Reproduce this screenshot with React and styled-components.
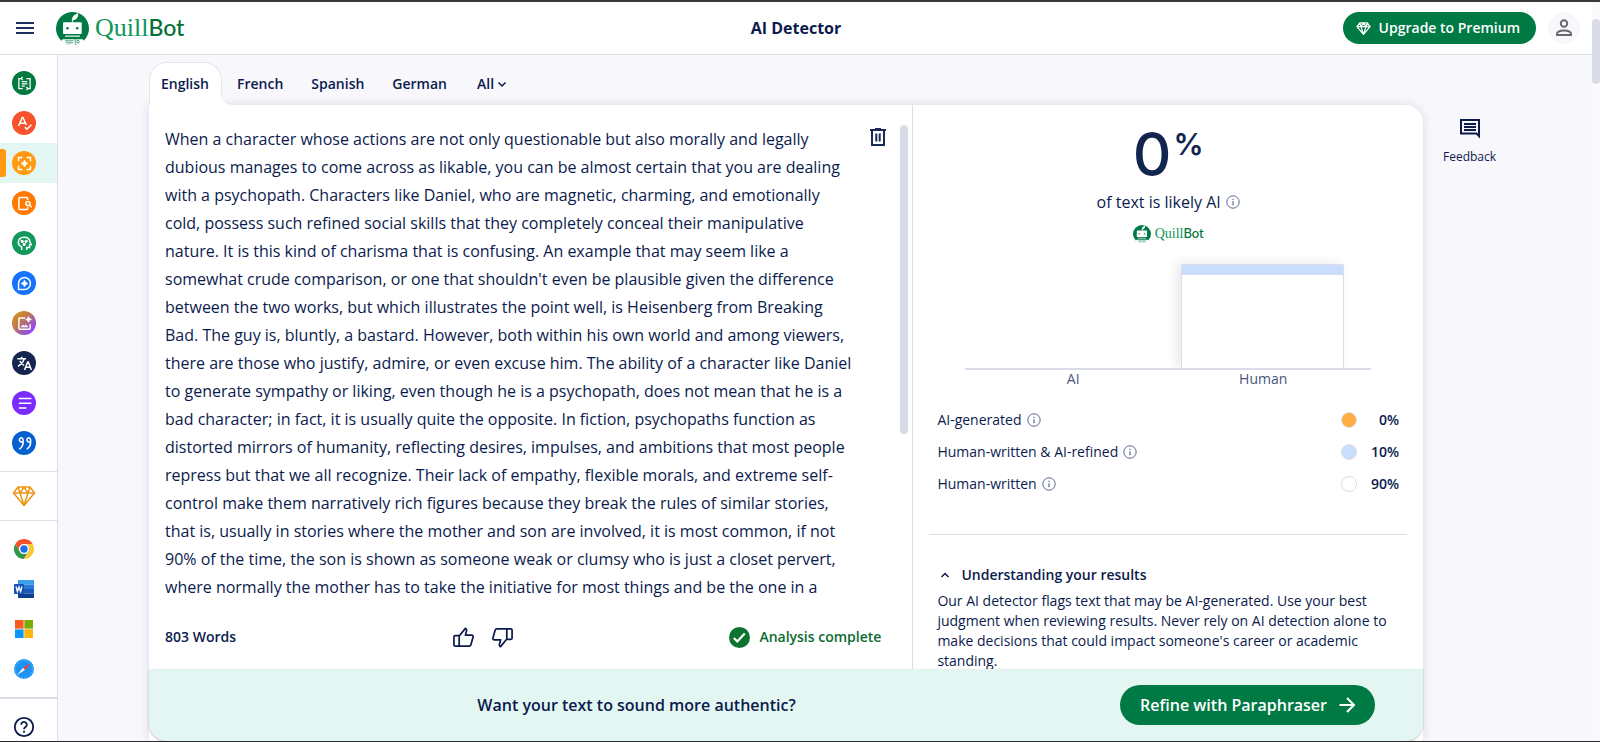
import React from 'react'
import styled, { createGlobalStyle, css } from 'styled-components'

const navy = '#0b1b4d'
const green = '#007a45'
const line = '#dcdee6'
const mint = '#e4f6f2'

const GlobalStyle = createGlobalStyle`
  * {
    box-sizing: border-box;
  }
  body {
    margin: 0;
    font-family: 'Open Sans', 'Noto Sans', sans-serif;
    font-size: 14px;
    line-height: 20px;
    color: ${navy};
    background: #f7f7fc;
  }
  button {
    font: inherit;
    color: inherit;
    border: 0;
    padding: 0;
    background: none;
    cursor: pointer;
  }
  a {
    color: inherit;
    text-decoration: none;
  }
  svg {
    display: block;
    flex: none;
  }
`

const Page = styled.div`
  display: flex;
  height: 100vh;
  overflow: hidden;
  border-top: 2px solid #3b3839;
  border-bottom: 1px solid #2a2a2c;
`

const Column = styled.div`
  flex: 1;
  min-width: 0;
  display: flex;
  flex-direction: column;
`

const PageScroll = styled.div`
  width: 8px;
  padding-top: 17px;
  background: #fafafd;
`

const ScrollThumb = styled.div`
  width: 8px;
  height: ${props => props.$length};
  border-radius: 4px;
  background: #d9dce6;
`

const Header = styled.header`
  display: grid;
  grid-template-columns: 1fr auto 1fr;
  align-items: center;
  height: 53px;
  flex: none;
  padding: 0 12px;
  background: #fff;
  border-bottom: 1px solid ${line};
`

const HeaderLeft = styled.div`
  display: flex;
  align-items: center;
  gap: 22px;
  padding-left: 4px;
`

const HeaderRight = styled.div`
  display: flex;
  align-items: center;
  justify-content: flex-end;
  gap: 12px;
`

const Title = styled.h1`
  margin: 0;
  font-size: 16px;
  font-weight: 700;
`

const UpgradeButton = styled.button`
  display: flex;
  align-items: center;
  gap: 8px;
  height: 32px;
  padding: 0 16px 0 13px;
  border-radius: 16px;
  background: ${green};
  color: #fff;
  font-weight: 600;
`

const Avatar = styled.button`
  display: grid;
  place-items: center;
  width: 32px;
  height: 32px;
  border-radius: 50%;
  background: #f7f7fc;
`

const Brand = styled.a`
  display: flex;
  align-items: center;
  gap: ${props => (props.$small ? '4px' : '6px')};
`

const Wordmark = styled.span`
  display: flex;
  align-items: baseline;
  line-height: 1;
`

const Quill = styled.span`
  font-family: 'Liberation Serif', serif;
  font-size: ${props => (props.$small ? '14px' : '26px')};
  color: #0f9658;
`

const Bot = styled.span`
  font-family: Lato, sans-serif;
  font-size: ${props => (props.$small ? '13px' : '23px')};
  font-weight: 500;
  color: #007033;
`

const Body = styled.div`
  flex: 1;
  min-height: 0;
  display: flex;
`

const Sidebar = styled.nav`
  flex: none;
  width: 58px;
  overflow: hidden;
  background: #fff;
  border-right: 1px solid ${line};
`

const NavGroup = styled.div`
  padding: ${props => props.$pad || '8px 0'};
  border-bottom: ${props => props.$border || '1px'} solid ${line};
`

const NavLink = styled.a`
  position: relative;
  display: flex;
  align-items: center;
  height: 40px;
  padding-left: 12px;
  ${props => props.$active && css`
    background: ${mint};
    &::before {
      content: '';
      position: absolute;
      left: 0;
      top: 6px;
      width: 6px;
      height: 28px;
      border-radius: 0 3px 3px 0;
      background: #ff9a12;
    }
  `}
`

const NavIcon = styled.span`
  display: grid;
  place-items: center;
  width: 24px;
  height: 24px;
  border-radius: 50%;
  background: ${props => props.$bg || 'none'};
`

const Main = styled.main`
  flex: 1;
  min-width: 0;
  display: flex;
  padding-left: 91px;
`

const Workspace = styled.section`
  flex: 1;
  min-width: 0;
  display: flex;
  flex-direction: column;
  padding-top: 7px;
`

const Tabs = styled.div`
  display: flex;
  flex: none;
  gap: 2px;
  height: 43px;
`

const Tab = styled.button`
  position: relative;
  z-index: 1;
  display: flex;
  align-items: center;
  gap: 2px;
  padding: 0 12px;
  border: 1px solid transparent;
  border-bottom: 0;
  font-weight: 600;
  ${props => props.$active && css`
    padding: 0 12px 0 11px;
    background: #fff;
    border-color: #e6e7ee;
    border-radius: 18px 18px 0 0;
    &::after {
      content: '';
      position: absolute;
      left: 100%;
      bottom: 0;
      width: 10px;
      height: 10px;
      background: radial-gradient(circle at 100% 0, transparent 9px, #e6e7ee 9px, #fff 10px);
    }
  `}
`

const MoreTab = styled(Tab)`
  padding-left: 14px;
`

const Card = styled.div`
  flex: 1;
  min-height: 0;
  display: flex;
  flex-direction: column;
  background: #fff;
  border-radius: 0 18px 0 0;
  box-shadow: 0 0 10px rgba(40, 40, 90, 0.14);
`

const Panes = styled.div`
  flex: 1;
  min-height: 0;
  display: grid;
  grid-template-columns: 3fr 2fr;
`

const Editor = styled.div`
  min-height: 0;
  display: flex;
  flex-direction: column;
  border-right: 1px solid ${line};
`

const EditorBody = styled.div`
  flex: 1;
  min-height: 0;
  display: flex;
  padding: 20px 4px 0 16px;
`

const TextBox = styled.textarea`
  flex: 1;
  min-width: 0;
  height: 100%;
  padding: 0 12px 0 0;
  border: 0;
  outline: 0;
  resize: none;
  overflow: hidden;
  background: none;
  font: 400 16px/28px 'Open Sans', 'Noto Sans', sans-serif;
  color: ${navy};
`

const ClearButton = styled.button`
  align-self: flex-start;
  margin: 2px 12px 0 0;
`

const EditorFooter = styled.div`
  flex: none;
  display: flex;
  justify-content: space-between;
  align-items: center;
  height: 68px;
  padding: 4px 31px 0 16px;
  font-weight: 600;
`

const Votes = styled.div`
  display: flex;
  gap: 16px;
`

const Status = styled.span`
  display: flex;
  align-items: center;
  gap: 9px;
  color: #0a6b32;
`

const Results = styled.div`
  min-height: 0;
  overflow: hidden;
  display: flex;
  flex-direction: column;
  align-items: center;
  padding: 17px 16px 0;
  > * {
    flex: none;
  }
`

const Score = styled.div`
  display: flex;
  align-items: flex-start;
  gap: 2px;
  height: 70px;
  font-family: Inter, sans-serif;
  font-weight: 500;
  font-size: 60px;
  line-height: 64px;
  color: #12254f;
`

const Percent = styled.span`
  font-size: 30px;
  font-weight: 600;
  line-height: 44px;
`

const ScoreCaption = styled.div`
  display: flex;
  align-items: center;
  gap: 5px;
  margin-bottom: 13px;
  font-size: 16px;
`

const Chart = styled.div`
  display: flex;
  align-items: flex-end;
  justify-content: center;
  gap: 28px;
  width: 85%;
  height: 127px;
  padding: 0 27px;
  border-bottom: 2px solid #d9dce6;
`

const Bar = styled.div`
  display: flex;
  flex-direction: column;
  flex: 1;
  height: ${props => props.$height};
  border-radius: 2px 2px 0 0;
  background: #fff;
  ${props => props.$filled && css`
    border: 1px solid ${line};
    border-bottom: 0;
    box-shadow: -4px 0 12px rgba(60, 40, 90, 0.12);
    clip-path: inset(-12px -12px 0 -12px);
  `}
`

const BarBand = styled.div`
  height: 10%;
  background: #c9ddff;
  border-bottom: 1px solid #d3dcf0;
`

const ChartLabels = styled.div`
  display: flex;
  gap: 28px;
  width: 85%;
  padding: 0 27px;
  line-height: 18px;
  text-align: center;
  color: #4a5680;
  span {
    flex: 1;
  }
`

const Legend = styled.dl`
  align-self: stretch;
  margin: 16px 0 34px;
  padding: 0 8px;
`

const LegendRow = styled.div`
  display: flex;
  align-items: center;
  height: 32px;
`

const LegendName = styled.dt`
  flex: 1;
  display: flex;
  align-items: center;
  gap: 5px;
`

const Dot = styled.span`
  width: 16px;
  height: 16px;
  border-radius: 50%;
  border: 1px solid ${line};
  background: ${props => props.$color};
`

const LegendValue = styled.dd`
  display: flex;
  align-items: center;
  margin: 0;
  font-weight: 600;
  b {
    width: 42px;
    font-weight: 600;
    text-align: right;
  }
`

const Explanation = styled.section`
  align-self: stretch;
  padding: 30px 8px 0;
  border-top: 1px solid #dedede;
  p {
    margin: 6px 0 0;
  }
`

const ExplanationToggle = styled.button`
  display: flex;
  align-items: center;
  gap: 8px;
  font-weight: 600;
`

const Banner = styled.div`
  flex: none;
  display: flex;
  align-items: center;
  height: 72px;
  padding: 0 48px 0 4px;
  background: ${mint};
  border-radius: 0 0 18px 18px;
  box-shadow: 0 1px 2px rgba(60, 40, 60, 0.3);
  font-size: 16px;
  font-weight: 600;
  span {
    flex: 1;
    text-align: center;
  }
`

const RefineButton = styled.button`
  display: flex;
  align-items: center;
  gap: 8px;
  height: 40px;
  padding: 0 16px 0 20px;
  border-radius: 20px;
  background: ${green};
  color: #fff;
  font-weight: 600;
`

const Aside = styled.aside`
  flex: none;
  width: 169px;
  padding: 61px 0 0 20px;
`

const FeedbackButton = styled.button`
  display: flex;
  flex-direction: column;
  align-items: center;
  gap: 7px;
  font-size: 12px;
`

const Icon = ({ size = 16, w = 2, color = 'currentColor', box = 24, children }) => (
  <svg
    width={size}
    height={size}
    viewBox={`0 0 ${box} ${box}`}
    fill="none"
    stroke={color}
    strokeWidth={w}
    aria-hidden="true"
  >
    {children}
  </svg>
)

const Robot = ({ size }) => (
  <svg width={size} height={size} viewBox="0 0 33 33" aria-hidden="true">
    <circle cx="16.5" cy="16.5" r="16.5" fill={green} />
    <path d="M16.300 8.500C15.500 5.500 18 2.300 22 1.300C22.800 4.500 21 7.300 17.500 8.200Z" fill="#fff" />
    <path d="M16.400 7v3.500" stroke="#fff" strokeWidth=".9" />
    <rect x="7" y="10.300" width="18.700" height="11.700" rx="1" fill="#fff" />
    <circle cx="11.500" cy="16.300" r="1.300" fill={green} />
    <circle cx="21.200" cy="16.300" r="1.300" fill={green} />
    <path d="M9 23.500h15v1.300H9z" fill="#e3efe8" />
    <path d="M6.600 27.200h20.200l1.500 2.100Q23 33.300 16.500 33Q10 33.300 5 29.300Z" fill="#fff" />
    <path d="M9 28.800h8.500M10 30.800h7" stroke={green} strokeWidth=".7" />
    <circle cx="22" cy="29.600" r="1.300" stroke={green} strokeWidth=".7" fill="none" />
    <path d="M19.200 27.200v5.300" stroke={green} strokeWidth=".7" />
  </svg>
)

const Logo = ({ small }) => (
  <Brand href="#" $small={small}>
    <Robot size={small ? 18 : 33} />
    <Wordmark>
      <Quill $small={small}>Quill</Quill>
      <Bot $small={small}>Bot</Bot>
    </Wordmark>
  </Brand>
)

const Diamond = ({ size, w, color }) => (
  <Icon size={size} w={w} color={color}>
    <path d="M6 3h12l4.500 6L12 21.500L1.500 9Z M1.500 9h21 M6 3L8 9L12 3L16 9L18 3 M8 9L12 21.500L16 9" strokeLinejoin="round" />
  </Icon>
)

const Info = () => (
  <Icon size={14} w={1} box={14} color="#5a678d">
    <circle cx="7" cy="7" r="6.200" />
    <path d="M7 6.200V10.200M7 3.800V5" strokeWidth="1.200" />
  </Icon>
)

const ThumbUp = () => (
  <Icon size={23} w={1.800}>
    <path d="M7.500 10v11H3.500a1.500 1.500 0 0 1-1.500-1.500V11.500a1.500 1.500 0 0 1 1.500-1.500ZM7.500 10.500L14 2.500q1.500.5 1.300 2.300L14 9.500h6.500a1.500 1.500 0 0 1 1.500 2l-2.300 8A2 2 0 0 1 17.800 21H7.500" strokeLinejoin="round" />
  </Icon>
)

const ThumbDown = () => (
  <Icon size={23} w={1.800}>
    <path d="M16.500 14V3h4a1.500 1.500 0 0 1 1.500 1.500v8a1.500 1.500 0 0 1-1.500 1.500ZM16.500 13.500L10 21.500q-1.500-.5-1.300-2.300L10 14.500H3.500a1.500 1.500 0 0 1-1.500-2l2.300-8A2 2 0 0 1 6.200 3H16.500" strokeLinejoin="round" />
  </Icon>
)

const spark = 'M12 6.500Q13 11 17.500 12Q13 13 12 17.500Q11 13 6.500 12Q11 11 12 6.500Z'

const tools = [
  {
    name: 'Paraphraser',
    bg: '#007a3d',
    icon: <path d="M9 1.500L6.500 4L9 6.500M7 4H3v16h6M15 22.500L17.500 20L15 17.500M17 20h4V4h-6M7.500 9h9M7.500 12.500h9M7.500 16h5" strokeWidth="2" />
  },
  {
    name: 'Grammar Checker',
    bg: '#f9532d',
    icon: <path d="M2.500 16L8.500 2.500h1l5.500 12M5 11.500h8M12.500 18l3.500 3l7-7" />
  },
  {
    name: 'AI Detector',
    bg: '#ff9a12',
    active: true,
    icon: <><path d="M2.500 8.500v-6h6M15.500 2.500h6v6M21.500 15.500v6h-6M8.500 21.500h-6v-6" /><path d={spark} fill="#fff" strokeWidth="1" /></>
  },
  {
    name: 'Plagiarism Checker',
    bg: '#ff7a00',
    icon: <><path d="M17 6.500V4a1.500 1.500 0 0 0-1.500-1.500H4.500A1.500 1.500 0 0 0 3 4v16A1.500 1.500 0 0 0 4.500 21.500h11a1.500 1.500 0 0 0 1.500-1.500V18" /><circle cx="17.500" cy="12" r="3.300" /><path d="M20 14.500l3.500 3.500" /></>
  },
  {
    name: 'AI Humanizer',
    bg: '#12995c',
    icon: <><path d="M7.500 22.500v-5Q2 15 2 10.500Q2.500 2 11.500 2Q20 2 21 10l1.500 4H20v4.500H15.500v4" /><path d="M8 8.500h7L11.500 14Z" strokeWidth="1.500" /><circle cx="8" cy="8.500" r="1.200" /><circle cx="15" cy="8.500" r="1.200" /><circle cx="11.500" cy="13.500" r="1.200" /></>
  },
  {
    name: 'AI Chat',
    bg: '#1472fb',
    icon: <><path d="M2.500 21.500V12a9.500 9.500 0 1 1 9.500 9.500Z" /><path d={spark} fill="#fff" strokeWidth="1" /></>
  },
  {
    name: 'Image Generator',
    bg: 'linear-gradient(135deg, #d99a00 0%, #c07a50 40%, #8b45ff 85%)',
    icon: <><path d="M13 3H4.500A1.500 1.500 0 0 0 3 4.500v15A1.500 1.500 0 0 0 4.500 21h15a1.500 1.500 0 0 0 1.500-1.500V13" /><path d="M6.500 17.500l3-3l2.500 2l2-2.500L17.500 17.500Z" fill="#fff" strokeWidth="1" /><path d="M18.500 1Q19 5 23 5.500Q19 6 18.500 10Q18 6 14 5.500Q18 5 18.500 1Z" fill="#fff" strokeWidth="1.500" /></>
  },
  {
    name: 'Translator',
    bg: '#14264f',
    icon: <path d="M.5 4.500h14M7.500 1v3.500M11.500 4.500Q9.500 12 1.500 16.500M4.500 8Q7 13 11.500 15M12 22.500l5-13h1L23 22.500M13.500 18h8" />
  },
  {
    name: 'Summarizer',
    bg: '#7a2cff',
    icon: <path d="M3 4h20M3 11.500h20M3 19h12" />
  },
  {
    name: 'Citation Generator',
    bg: '#0560cf',
    icon: <path d="M9.500 9a3.500 3.500 0 1 1-3.500-6A3.700 3.700 0 0 1 9.800 7.500Q10.500 17 3.500 21M21.500 9a3.500 3.500 0 1 1-3.500-6A3.700 3.700 0 0 1 21.800 7.500Q22.500 17 15.500 21" />
  }
]

const apps = [
  {
    name: 'Chrome',
    icon: (
      <svg width="20" height="20" viewBox="0 0 48 48">
        <path d="M44.800 12A24 24 0 0 0 3.200 12L13.600 30A12 12 0 0 1 24 12Z" fill="#f4512c" />
        <path d="M3.200 12A24 24 0 0 0 24 48L34.400 30A12 12 0 0 1 13.600 30Z" fill="#34984b" />
        <path d="M24 48A24 24 0 0 0 44.800 12H24A12 12 0 0 1 34.400 30Z" fill="#fdc93b" />
        <circle cx="24" cy="24" r="11.500" fill="#fff" />
        <circle cx="24" cy="24" r="8.800" fill="#1a6fe8" />
      </svg>
    )
  },
  {
    name: 'Word',
    icon: (
      <svg width="20" height="18" viewBox="0 0 20 18">
        <path d="M4 0h16v4.500H4z" fill="#3aa0ee" />
        <path d="M4 4.500h16V9H4z" fill="#2a7bd8" />
        <path d="M4 9h16v4.500H4z" fill="#1a5abd" />
        <path d="M4 13.500h16V18H4z" fill="#103f91" />
        <rect y="4" width="10" height="10" rx="1" fill="#1850b4" />
        <path d="M2 6.500l1.400 5L5 7l1.600 4.500L8 6.500" stroke="#fff" strokeWidth="1.300" fill="none" />
      </svg>
    )
  },
  {
    name: 'Windows',
    icon: (
      <svg width="18" height="18" viewBox="0 0 18 18">
        <path d="M0 0h18v18H0z" fill="#e8e0c8" />
        <path d="M0 0h8.500v8.500H0z" fill="#fb5a20" />
        <path d="M9.500 0H18v8.500H9.500z" fill="#7cab05" />
        <path d="M0 9.500h8.500V18H0z" fill="#0a98f8" />
        <path d="M9.500 9.500H18V18H9.500z" fill="#ffb506" />
      </svg>
    )
  },
  {
    name: 'Safari',
    icon: (
      <svg width="20" height="20" viewBox="0 0 20 20">
        <circle cx="10" cy="10" r="10" fill="#1b93f5" />
        <circle cx="10" cy="10" r="8.600" fill="none" stroke="#8fd0ff" strokeWidth=".8" strokeDasharray=".6 1" />
        <path d="M17 4L9 8.800L11 11Z" fill="#fb3b2f" />
        <path d="M3 16L9 8.800L11 11Z" fill="#f2f6fb" />
      </svg>
    )
  }
]

const legend = [
  { name: 'AI-generated', color: '#ffae42', value: '0%' },
  { name: 'Human-written & AI-refined', color: '#c9ddff', value: '10%' },
  { name: 'Human-written', color: '#fff', value: '90%' }
]

const essay = "When a character whose actions are not only questionable but also morally and legally dubious manages to come across as likable, you can be almost certain that you are dealing with a psychopath. Characters like Daniel, who are magnetic, charming, and emotionally cold, possess such refined social skills that they completely conceal their manipulative nature. It is this kind of charisma that is confusing. An example that may seem like a somewhat crude comparison, or one that shouldn't even be plausible given the difference between the two works, but which illustrates the point well, is Heisenberg from Breaking Bad. The guy is, bluntly, a bastard. However, both within his own world and among viewers, there are those who justify, admire, or even excuse him. The ability of a character like Daniel to generate sympathy or liking, even though he is a psychopath, does not mean that he is a bad character; in fact, it is usually quite the opposite. In fiction, psychopaths function as distorted mirrors of humanity, reflecting desires, impulses, and ambitions that most people repress but that we all recognize. Their lack of empathy, flexible morals, and extreme self-control make them narratively rich figures because they break the rules of similar stories, that is, usually in stories where the mother and son are involved, it is most common, if not 90% of the time, the son is shown as someone weak or clumsy who is just a closet pervert, where normally the mother has to take the initiative for most things and be the one in a"

const TopBar = () => (
  <Header>
    <HeaderLeft>
      <button aria-label="Menu">
        <Icon size={18} w={2} box={18} color="#1f2f5c">
          <path d="M0 4h18M0 9h18M0 14h18" />
        </Icon>
      </button>
      <Logo />
    </HeaderLeft>
    <Title>AI Detector</Title>
    <HeaderRight>
      <UpgradeButton>
        <Diamond size={15} w={2} />
        Upgrade to Premium
      </UpgradeButton>
      <Avatar aria-label="Account">
        <Icon size={24} w={2} color="#6a6a6e">
          <circle cx="12" cy="7.500" r="3.200" />
          <path d="M5 19v-1q0-3.500 7-3.500t7 3.500v1Z" />
        </Icon>
      </Avatar>
    </HeaderRight>
  </Header>
)

const SideNav = () => (
  <Sidebar>
    <NavGroup>
      {tools.map(tool => (
        <NavLink key={tool.name} href="#" aria-label={tool.name} $active={tool.active}>
          <NavIcon $bg={tool.bg}>
            <Icon size={15} w={2.4} color="#fff">{tool.icon}</Icon>
          </NavIcon>
        </NavLink>
      ))}
    </NavGroup>
    <NavGroup $pad="4px 0">
      <NavLink href="#" aria-label="Premium">
        <NavIcon><Diamond size={24} w={1.500} color="#ec9612" /></NavIcon>
      </NavLink>
    </NavGroup>
    <NavGroup $border="2px">
      {apps.map(app => (
        <NavLink key={app.name} href="#" aria-label={app.name}>
          <NavIcon>{app.icon}</NavIcon>
        </NavLink>
      ))}
    </NavGroup>
    <NavGroup>
      <NavLink href="#" aria-label="Help">
        <NavIcon>
          <Icon size={24} w={1.800}>
            <circle cx="12" cy="12" r="9.200" />
            <path d="M9.200 9.800a2.800 2.800 0 1 1 4.300 2.300Q12 13.100 12 14.300M12 15.700v2" />
          </Icon>
        </NavIcon>
      </NavLink>
    </NavGroup>
  </Sidebar>
)

const LanguageTabs = () => (
  <Tabs role="tablist">
    {['English', 'French', 'Spanish', 'German'].map((name, i) => (
      <Tab key={name} role="tab" aria-selected={i === 0} $active={i === 0}>{name}</Tab>
    ))}
    <MoreTab aria-haspopup="menu">
      All
      <Icon size={12} w={1.500} box={12}><path d="M2.500 4.500L6 8l3.500-3.500" /></Icon>
    </MoreTab>
  </Tabs>
)

const EditorPane = () => (
  <Editor>
    <EditorBody>
      <TextBox aria-label="Text to analyze" defaultValue={essay} spellCheck={false} />
      <ClearButton aria-label="Delete text">
        <Icon size={20} w={2} box={20} color="#1b2b59">
          <path d="M2 3h16M7 2h6M4 3V18h12V3M8.300 6.500v8M11.700 6.500v8" />
        </Icon>
      </ClearButton>
      <ScrollThumb $length="65%" />
    </EditorBody>
    <EditorFooter>
      <span>803 Words</span>
      <Votes>
        <button aria-label="Good result"><ThumbUp /></button>
        <button aria-label="Bad result"><ThumbDown /></button>
      </Votes>
      <Status>
        <Icon size={21} w={2.600}>
          <circle cx="12" cy="12" r="12" fill="#0c7430" stroke="none" />
          <path d="M5.500 12.500l4 4l8.500-9" stroke="#fff" />
        </Icon>
        Analysis complete
      </Status>
    </EditorFooter>
  </Editor>
)

const ResultsPane = () => (
  <Results>
    <Score>0<Percent>%</Percent></Score>
    <ScoreCaption>of text is likely AI <Info /></ScoreCaption>
    <Logo small />
    <Chart>
      <Bar $height="0" />
      <Bar $height="104px" $filled><BarBand /></Bar>
    </Chart>
    <ChartLabels>
      <span>AI</span>
      <span>Human</span>
    </ChartLabels>
    <Legend>
      {legend.map(item => (
        <LegendRow key={item.name}>
          <LegendName>{item.name} <Info /></LegendName>
          <LegendValue>
            <Dot $color={item.color} />
            <b>{item.value}</b>
          </LegendValue>
        </LegendRow>
      ))}
    </Legend>
    <Explanation>
      <ExplanationToggle aria-expanded="true">
        <Icon size={16} w={1.500} box={16}><path d="M4.500 10L8 6.500L11.500 10" /></Icon>
        Understanding your results
      </ExplanationToggle>
      <p>
        Our AI detector flags text that may be AI-generated. Use your best judgment when
        reviewing results. Never rely on AI detection alone to make decisions that could
        impact someone's career or academic standing.
      </p>
    </Explanation>
  </Results>
)

export default function App() {
  return (
    <Page>
      <GlobalStyle />
      <Column>
        <TopBar />
        <Body>
          <SideNav />
          <Main>
            <Workspace>
              <LanguageTabs />
              <Card>
                <Panes>
                  <EditorPane />
                  <ResultsPane />
                </Panes>
                <Banner>
                  <span>Want your text to sound more authentic?</span>
                  <RefineButton>
                    Refine with Paraphraser
                    <Icon size={24} w={2}><path d="M4.500 12h14M12 5l7 7l-7 7" /></Icon>
                  </RefineButton>
                </Banner>
              </Card>
            </Workspace>
            <Aside>
              <FeedbackButton>
                <Icon size={24} w={2}>
                  <path d="M3 4h18v16l-2.500-2.500H3ZM6 8h12M6 11h12M6 14h12" />
                </Icon>
                Feedback
              </FeedbackButton>
            </Aside>
          </Main>
        </Body>
      </Column>
      <PageScroll><ScrollThumb $length="65px" /></PageScroll>
    </Page>
  )
}
